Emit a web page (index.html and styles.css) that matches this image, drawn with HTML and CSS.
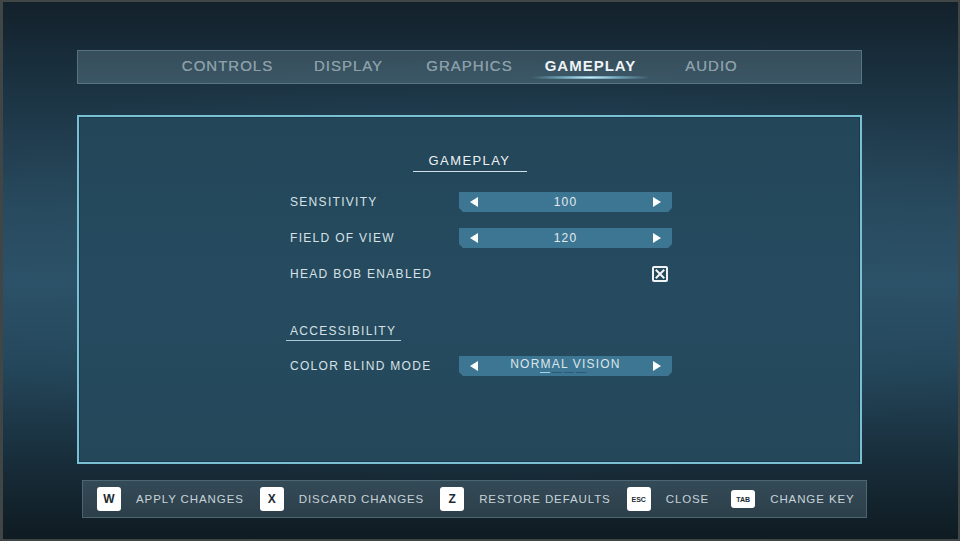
FILE: index.html
```html
<!DOCTYPE html>
<html>
<head>
<meta charset="utf-8">
<link rel="stylesheet" href="styles.css">
</head>
<body>
<div class="frame">
  <nav class="tabs">
    <div class="tab">CONTROLS</div>
    <div class="tab">DISPLAY</div>
    <div class="tab">GRAPHICS</div>
    <div class="tab active">GAMEPLAY</div>
    <div class="tab">AUDIO</div>
  </nav>

  <section class="panel">
    <div class="heading-wrap"><h2 class="heading">GAMEPLAY</h2></div>
    <div class="rows">
      <div class="row">
        <span class="label">SENSITIVITY</span>
        <div class="slider"><span class="arrow left"></span><span class="value">100</span><span class="arrow right"></span></div>
      </div>
      <div class="row">
        <span class="label">FIELD OF VIEW</span>
        <div class="slider"><span class="arrow left"></span><span class="value">120</span><span class="arrow right"></span></div>
      </div>
      <div class="row">
        <span class="label">HEAD BOB ENABLED</span>
        <div class="check-cell">
          <span class="checkbox"><svg width="10" height="10" viewBox="0 0 10 10"><path d="M1.5 1.5 L8.5 8.5 M8.5 1.5 L1.5 8.5" stroke="#f2f5f6" stroke-width="2" stroke-linecap="square"/></svg></span>
        </div>
      </div>
      <div class="sub-wrap"><h3 class="subheading">ACCESSIBILITY</h3></div>
      <div class="row">
        <span class="label">COLOR BLIND MODE</span>
        <div class="slider"><span class="arrow left"></span><span class="value raised">NORMAL VISION<span class="dots"><i class="on"></i><i></i><i></i><i></i></span></span><span class="arrow right"></span></div>
      </div>
    </div>
  </section>

  <footer class="keys">
    <span class="key">W</span><span class="key-label">APPLY CHANGES</span>
    <span class="key">X</span><span class="key-label">DISCARD CHANGES</span>
    <span class="key">Z</span><span class="key-label">RESTORE DEFAULTS</span>
    <span class="key small">ESC</span><span class="key-label close">CLOSE</span>
    <span class="key small short">TAB</span><span class="key-label">CHANGE KEY</span>
  </footer>
</div>
</body>
</html>
```

FILE: styles.css
```css
* { box-sizing: border-box; margin: 0; padding: 0; }

html, body {
  width: 960px;
  height: 541px;
  overflow: hidden;
}

body {
  background: #3f4645;
  font-family: "Liberation Sans", Arial, sans-serif;
}

.frame {
  width: 960px;
  height: 541px;
  border-style: solid;
  border-color: #3f4645;
  border-width: 2px 2px 2px 3px;
  background:
    radial-gradient(ellipse 60% 40% at 50% 50%, rgba(50, 95, 120, 0.55) 0%, rgba(40, 80, 100, 0.25) 55%, rgba(0, 0, 0, 0) 100%),
    linear-gradient(to bottom, #13212b 0%, #1c3545 18%, #28495d 38%, #2c5269 52%, #24465a 68%, #182e3b 85%, #0f1b22 100%);
  display: flex;
  flex-direction: column;
  padding-left: 74px;
}

/* ---------- Tabs ---------- */
.tabs {
  margin-top: 48px;
  width: 785px;
  height: 34px;
  background: linear-gradient(to bottom, rgba(120, 150, 165, 0.32), rgba(110, 145, 160, 0.38));
  border: 1px solid rgba(150, 180, 192, 0.35);
  display: flex;
  justify-content: center;
  align-items: flex-start;
}

.tab {
  width: 121px;
  height: 32px;
  text-align: center;
  font-size: 15px;
  letter-spacing: 1px;
  color: #8a9fa8;
  line-height: 29px;
  position: relative;
  text-shadow: 0 0 0.4px #8a9fa8;
}

.tab.active {
  color: #eef3f5;
  font-weight: bold;
  text-shadow: none;
}

.tab.active::after {
  content: "";
  position: absolute;
  left: 0;
  right: 0;
  bottom: 4px;
  height: 3px;
  background: radial-gradient(ellipse 50% 100% at 50% 50%, rgba(200, 240, 252, 1) 0%, rgba(140, 205, 228, 0.6) 50%, rgba(100, 170, 200, 0) 100%);
}

/* ---------- Panel ---------- */
.panel {
  margin-top: 31px;
  width: 785px;
  height: 349px;
  border: 2px solid #79c0d4;
  box-shadow: inset 0 0 0 1px #1b3a4d;
  background: linear-gradient(to bottom, #234658 0%, #264b60 50%, #244759 100%);
  display: flex;
  flex-direction: column;
}

.heading-wrap {
  display: flex;
  justify-content: center;
  margin-top: 36px;
}

.heading {
  font-size: 13px;
  font-weight: normal;
  letter-spacing: 1.4px;
  color: #edf2f4;
  line-height: 16px;
  width: 114px;
  text-align: center;
  padding-bottom: 2px;
  border-bottom: 1px solid #cfe1e7;
}

.rows {
  margin-top: 12px;
  padding-left: 211px;
  display: flex;
  flex-direction: column;
}

.row {
  height: 36px;
  display: flex;
  align-items: center;
}

.label {
  width: 169px;
  font-size: 12px;
  letter-spacing: 1.3px;
  color: #d7e1e5;
}

.slider {
  position: relative;
  width: 213px;
  height: 20px;
  background: #3d7693;
  clip-path: polygon(0 0, 100% 0, 100% calc(100% - 4px), calc(100% - 4px) 100%, 4px 100%, 0 calc(100% - 4px));
  display: flex;
  align-items: center;
  justify-content: space-between;
  padding: 0 11px 0 11px;
}

.arrow {
  width: 0;
  height: 0;
  border-top: 5px solid transparent;
  border-bottom: 5px solid transparent;
}

.arrow.left { border-right: 8px solid #ffffff; }
.arrow.right { border-left: 8px solid #ffffff; }

.value {
  position: relative;
  font-size: 12px;
  letter-spacing: 1.2px;
  color: #e3ecef;
  line-height: 14px;
}

.value.raised {
  top: -2px;
  color: #dbe6ea;
}

.dots {
  position: absolute;
  left: 50%;
  transform: translateX(-50%);
  margin-left: -2px;
  top: 15px;
  display: flex;
  gap: 2px;
}

.dots i {
  display: block;
  width: 10px;
  height: 1px;
  background: #2c5a72;
}

.dots i.on { background: #9fd6ea; }

.check-cell {
  width: 213px;
  display: flex;
  justify-content: flex-end;
  padding-right: 4px;
}

.checkbox {
  width: 16px;
  height: 16px;
  border: 2px solid #eef3f5;
  border-radius: 2px;
  background: #27495c;
  display: flex;
  align-items: center;
  justify-content: center;
}

.sub-wrap {
  margin-top: 31px;
  margin-left: -4px;
  display: flex;
}

.subheading {
  font-size: 12px;
  font-weight: normal;
  letter-spacing: 1.3px;
  color: #d7e1e5;
  line-height: 16px;
  padding: 0 4px 1px 4px;
  width: 115px;
  border-bottom: 1px solid #a9cbd7;
}

.sub-wrap + .row { margin-top: 7px; }

/* ---------- Footer keys ---------- */
.keys {
  margin-top: 16px;
  margin-left: 5px;
  width: 785px;
  height: 38px;
  background: linear-gradient(to bottom, rgba(115, 145, 160, 0.32), rgba(100, 130, 145, 0.32));
  border: 1px solid rgba(140, 170, 182, 0.32);
  display: flex;
  align-items: center;
  padding-left: 14px;
}

.key {
  width: 24px;
  height: 24px;
  background: #ffffff;
  border-radius: 3px;
  color: #1b2a33;
  font-size: 12px;
  font-weight: bold;
  display: flex;
  align-items: center;
  justify-content: center;
  flex-shrink: 0;
}

.key.small {
  font-size: 7px;
  letter-spacing: 0;
}

.key.short { height: 18px; }

.key-label {
  font-size: 11.5px;
  letter-spacing: 0.9px;
  color: #c7d3d8;
  margin-left: 15px;
  margin-right: 16px;
  white-space: nowrap;
}

.key-label.close { margin-right: 22px; }
```
